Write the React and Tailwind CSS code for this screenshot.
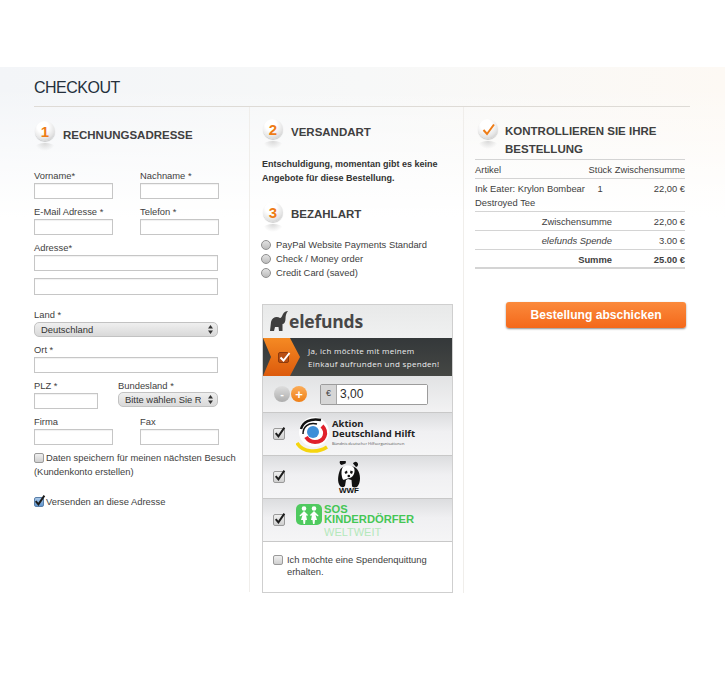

const Badge = ({ children }) => (
  <div className="relative w-[24px] h-[32px] shrink-0">
    <div className="absolute left-[1px] top-[22px] w-[20px] h-[8px] rounded-[50%] bg-[radial-gradient(ellipse_at_top,#d8d8d8,transparent_70%)]" />
    <div className="w-[20px] h-[20px] ml-[1px] rounded-full bg-[radial-gradient(circle_at_40%_30%,#ffffff_30%,#e4e4e4_65%,#b4b4b4)] flex items-center justify-center text-[#ee7c16] font-bold text-[15px] leading-none shadow-[0_1px_1px_rgba(0,0,0,0.2)]">
      {children}
    </div>
  </div>
);

const H = ({ children, className = "" }) => (
  <h2 className={"text-[11.5px] font-bold text-[#404040] leading-[18px] " + className}>{children}</h2>
);

const Label = ({ children }) => <label className="block h-[14px] leading-[14px] text-[#3e3e3e]">{children}</label>;

const Input = ({ w = "w-[79px]" }) => (
  <input className={w + " block h-[16px] bg-white border border-[#c6c6c6] shadow-[inset_0_1px_1px_rgba(0,0,0,0.06)]"} />
);

const Field = ({ label, w }) => (
  <div>
    <Label>{label}</Label>
    <Input w={w} />
  </div>
);

const Sel = ({ w, children, pl = "pl-[6px]" }) => (
  <div className={"relative h-[15px] " + w}>
    <select className={"appearance-none block w-full h-[15px] rounded-[5px] border border-[#c2c2c2] bg-[linear-gradient(#efefef,#d9d9d9)] text-[#333] text-[9.4px] leading-[13px] overflow-hidden pr-[16px] " + pl}>
      <option>{children}</option>
    </select>
    <svg className="absolute right-[5px] top-[3px] pointer-events-none" width="5" height="9" viewBox="0 0 5 9" fill="#333">
      <path d="M2.5 0 5 3.4H0zM2.5 9 0 5.6h5z" />
    </svg>
  </div>
);

const Check = ({ checked, blue, className = "" }) => (
  <span className={"inline-flex shrink-0 items-center justify-center w-[10px] h-[10px] rounded-[2px] border " + (blue ? "border-[#5a7fa8] bg-[linear-gradient(#a9c8e8,#5f95cf)] " : "border-[#9a9a9a] bg-[linear-gradient(#f0f0f0,#cfcfcf)] ") + className}>
    {checked && (
      <svg width="13" height="13" viewBox="0 0 12 12" fill="none" className="-mt-[3px] shrink-0">
        <path d="M2.5 6.5 5 9.5 10.5 1.5" stroke="#1d1d1d" strokeWidth="1.8" />
      </svg>
    )}
  </span>
);

const Radio = ({ label }) => (
  <div className="flex items-center h-[14px]">
    <span className="w-[10px] h-[10px] rounded-full border border-[#8e8e8e] bg-[linear-gradient(#e2e2e2,#bcbcbc)] mr-[4px] ml-[-1px]" />
    <span className="ml-[1px]">{label}</span>
  </div>
);

const Row = ({ children, className = "" }) => (
  <div className={"grid grid-cols-[137px_73px] border-b border-[#d4d4d4] " + className}>{children}</div>
);

const CharityRow = ({ children, h = "h-[42px]" }) => (
  <div className={h + " flex items-center relative border-b border-[#c8c8c8] bg-[linear-gradient(#dcdddf,#f0f0f2_45%,#f5f5f6)]"}>
    <Check checked className="ml-[10px] !w-[12px] !h-[12px]" />
    {children}
  </div>
);

export default function App() {
  return (
    <div className="min-h-[680px] bg-white text-[9.4px] text-[#3e3e3e] font-['Liberation_Sans',Arial,sans-serif]">
      <div className="h-[67px]" />
      <div className="h-[613px] pl-[34px] bg-[linear-gradient(to_bottom,transparent_0,transparent_20px,#ffffff_150px),linear-gradient(to_right,#f3f5f8,#f7f8f8_50%,#fdf9f4)]">
        <div className="w-[656px]">
          <div className="h-[40px] border-b border-[#dedbd6] flex items-start pt-[12px]">
            <h1 className="text-[16px] leading-[18px] text-[#24303c] tracking-[-0.5px]">CHECKOUT</h1>
          </div>
          <div className="flex">
            <section className="w-[216px] h-[485px] border-r border-[#f0eeeb]">
              <div className="flex items-start pt-[14px] h-[62px]">
                <Badge>1</Badge>
                <H className="ml-[5px] mt-[5px]">RECHNUNGSADRESSE</H>
              </div>
              <div className="grid grid-cols-[106px_79px] gap-y-[6px] pr-0">
                <Field label="Vorname*" />
                <Field label="Nachname *" />
                <Field label="E-Mail Adresse *" />
                <Field label="Telefon *" />
              </div>
              <div className="mt-[6px]">
                <Field label="Adresse*" w="w-[184px]" />
              </div>
              <div className="mt-[7px]">
                <Input w="w-[184px] !h-[17px]" />
              </div>
              <div className="mt-[13px]">
                <Label>Land *</Label>
                <Sel w="w-[184px]">Deutschland</Sel>
              </div>
              <div className="mt-[6px]">
                <Field label="Ort *" w="w-[184px]" />
              </div>
              <div className="mt-[6px] flex">
                <Field label="PLZ *" w="w-[64px]" />
                <div className="ml-[20px]">
                  <Label>Bundesland *</Label>
                  <div className="-mt-[1px]"><Sel w="w-[100px]">Bitte wählen Sie Region</Sel></div>
                </div>
              </div>
              <div className="mt-[6px] grid grid-cols-[106px_79px]">
                <Field label="Firma" />
                <Field label="Fax" />
              </div>
              <div className="mt-[6px] leading-[14px]">
                <div className="flex items-center whitespace-nowrap">
                  <Check className="mr-[2px]" />Daten speichern für meinen nächsten Besuch
                </div>
                <div>(Kundenkonto erstellen)</div>
              </div>
              <div className="mt-[16px] flex items-center leading-[14px]">
                <Check checked blue className="mr-[2px]" />Versenden an diese Adresse
              </div>
            </section>

            <section className="w-[214px] pl-[12px] pr-[10px] border-r border-[#f0eeeb]">
              <div className="flex items-start pt-[12px] h-[50px]">
                <Badge>2</Badge>
                <H className="ml-[5px] mt-[4px]">VERSANDART</H>
              </div>
              <p className="font-bold text-[9px] leading-[14px] text-[#333] whitespace-nowrap">
                Entschuldigung, momentan gibt es keine<br />Angebote für diese Bestellung.
              </p>
              <div className="flex items-start mt-[17px] h-[32px]">
                <Badge>3</Badge>
                <H className="ml-[5px] mt-[3px]">BEZAHLART</H>
              </div>
              <div className="mt-[4px] ml-0">
                <Radio label="PayPal Website Payments Standard" />
                <Radio label="Check / Money order" />
                <Radio label="Credit Card (saved)" />
              </div>

              <div className="mt-[24px] w-[191px] h-[289px] border border-[#cfcfcf] bg-white">
                <div className="h-[33px] flex items-center pl-[7px] bg-[linear-gradient(#e8e9e9,#f0f1f1)]">
                  <svg width="18" height="21" viewBox="0 0 18 21" fill="#3e3e3e">
                    <path d="M0 20 1 11C2 6 7 5 10 7 11.500 7 12 5 13 3 14 1 16 0 18 0 16 2 15.500 5 15.500 8 15.500 11 14 13 12.500 13L12.500 20H9L8.500 16H5L4 20z" />
                  </svg>
                  <span className="ml-[1px] font-['Open_Sans',sans-serif] font-bold text-[#474747] text-[17.500px] leading-none tracking-[-0.2px]">elefunds</span>
                </div>
                <div className="relative h-[38px] bg-[linear-gradient(#34383a,#454744)] flex items-center pl-[45px]">
                  <svg className="absolute left-0 top-0" width="38" height="38" viewBox="0 0 38 38">
                    <defs>
                      <linearGradient id="og" x1="0" y1="0" x2="0" y2="1">
                        <stop offset="0" stopColor="#f58a23" />
                        <stop offset="1" stopColor="#dc5a0c" />
                      </linearGradient>
                    </defs>
                    <path d="M0 0H27L37 19 27 38H0L8 19z" fill="url(#og)" />
                  </svg>
                  <span className="absolute left-[15px] top-[14px] w-[11px] h-[11px] rounded-[2px] bg-[#b84e12] border border-[#8d3a0c]">
                    <svg className="absolute -left-[1px] -top-[3px]" width="13" height="13" viewBox="0 0 13 13" fill="none">
                      <path d="M2.500 7.500 5.500 10.500 11.500 3" stroke="#fff" strokeWidth="2" />
                    </svg>
                  </span>
                  <div className="text-[#eeeeee] text-[8px] leading-[13px] font-['Open_Sans',sans-serif] tracking-[0.3px] whitespace-nowrap">
                    Ja, ich möchte mit meinem<br />Einkauf aufrunden und spenden!
                  </div>
                </div>
                <div className="h-[37px] flex items-center pl-[11px] border-b border-[#c8c8c8] bg-[linear-gradient(#e2e3e4,#f2f2f3)]">
                  <span className="w-[16px] h-[16px] rounded-full bg-[linear-gradient(#dedede,#adadad)] flex items-center justify-center text-white font-bold text-[11px] leading-none">-</span>
                  <span className="w-[16px] h-[16px] ml-[1px] rounded-full bg-[linear-gradient(#fbac58,#ef7f17)] flex items-center justify-center text-white font-bold text-[13px] leading-none">+</span>
                  <div className="ml-[13px] flex h-[21px] w-[108px] border border-[#9c9c9c] rounded-[2px]">
                    <span className="w-[16px] bg-[#d6d6d6] border-r border-[#a8a8a8] flex items-center justify-center text-[9px] text-[#444]">€</span>
                    <input readOnly value="3,00" className="min-w-0 flex-1 bg-white pl-[3px] text-[12px] text-[#2c2c2c]" />
                  </div>
                </div>
                <CharityRow h="h-[43px]">
                  <svg className="absolute left-[33px] top-[4px]" width="34" height="36" viewBox="0 0 34 36" fill="none">
                    <circle cx="18" cy="15" r="15" fill="#fff" />
                    <path d="M5 12C7 5 14 1 25 3" stroke="#111" strokeWidth="2.500" />
                    <path d="M7 17C7 10 12 5 21 7" stroke="#111" strokeWidth="1.500" />
                    <path d="M26 9C32 15 29 25 19 25 15 25 12 23 10 20" stroke="#e0212b" strokeWidth="4" />
                    <circle cx="17" cy="15" r="6" fill="#3e8fd8" />
                    <path d="M1 26C7 36 22 36 31 30" stroke="#f5d50f" strokeWidth="3.500" />
                  </svg>
                  <div className="absolute left-[69px] top-[6px] font-['Open_Sans',sans-serif] font-bold text-[#222] text-[9.500px] leading-[10px] whitespace-nowrap">
                    Aktion<br />Deutschland Hilft
                    <div className="text-[4px] leading-[10px] font-normal text-[#555]">Bündnis deutscher Hilfsorganisationen</div>
                  </div>
                </CharityRow>
                <CharityRow h="h-[43px]">
                  <svg className="absolute left-[74px] top-[5px]" width="24" height="27" viewBox="0 0 24 27">
                    <path d="M4.500 4a3 3 0 1 1 4-1.500zM16 2.500a2.600 2.600 0 1 1 3 3.500z" fill="#111" />
                    <path d="M3 9C5 4 17 4 20 8 24 13 24 22 20 26 17 27 15 26 15 25L14.500 19 11 18 9 19 8 25C6 27 4 26 3 25 0 21 1 14 3 9z" fill="#111" />
                    <path d="M6 6C9 4 15 4 17 7 18.500 10 17 16 12.500 17 8 18 6 21 5 16 4 12 4.500 8 6 6z" fill="#fff" />
                    <path d="M7.500 11l2.500-1.500 .5 2.500-2 1zM16 10.500l-2.500-1-.5 2.500 2 1z" fill="#111" />
                    <circle cx="11.800" cy="15" r="1.300" fill="#111" />
                  </svg>
                  <span className="absolute left-[74px] top-[30px] w-[24px] text-center font-bold text-[8px] leading-[9px] text-[#111]">WWF</span>
                </CharityRow>
                <CharityRow h="h-[43px]">
                  <svg className="absolute left-[33px] top-[3px]" width="26" height="26" viewBox="0 0 26 26">
                    <rect width="26" height="21" y="2" rx="5" fill="#4fca5f" />
                    <g fill="#fff">
                      <circle cx="8" cy="6.500" r="2.300" />
                      <circle cx="18" cy="6.500" r="2.300" />
                      <path d="M8 9 12 13 11 14 10 13 11 18H9.500L9 22H7.500L7 18H5L6.500 13 4 14.500 3.500 13.500z" />
                      <path d="M18 9 22.500 13.500 22 14.500 19.500 13 21 18H19L18.500 22H17L16.500 18H15L16 13 15 14 14 13z" />
                    </g>
                  </svg>
                  <div className="absolute left-[61px] top-[5px] whitespace-nowrap">
                    <div className="text-[#45c655] font-bold text-[11.200px] leading-[10px]">SOS</div>
                    <div className="text-[#45c655] font-bold text-[11.200px] leading-[10px]">KINDERDÖRFER</div>
                    <div className="text-[#b4e8bb] text-[11px] leading-[12px] mt-[2px]">WELTWEIT</div>
                  </div>
                </CharityRow>
                <div className="flex items-start pl-[10px] pt-[12px] leading-[11.500px]">
                  <Check className="mt-[1px] mr-[4px]" />
                  <span>Ich möchte eine Spendenquittung<br />erhalten.</span>
                </div>
              </div>
            </section>

            <section className="pl-[11px] w-[226px]">
              <div className="flex items-start pt-[12px] pl-[2px] h-[52px]">
                <Badge>
                  <svg width="13" height="13" viewBox="0 0 13 13" fill="none">
                    <path d="M1.500 7 5 11 12 1.500" stroke="#ee7c16" strokeWidth="2" />
                  </svg>
                </Badge>
                <H className="ml-[4px] mt-[3px] w-[170px]">KONTROLLIEREN SIE IHRE BESTELLUNG</H>
              </div>
              <div className="w-[210px] border-t border-[#d4d4d4]">
                <Row className="h-[19px] leading-[19px]">
                  <div className="flex justify-between"><span>Artikel</span><span>Stück</span></div>
                  <span className="text-right whitespace-nowrap">Zwischensumme</span>
                </Row>
                <Row className="h-[33px] leading-[14px] pt-[3px]">
                  <div className="grid grid-cols-[115px_22px]">
                    <span>Ink Eater: Krylon Bombear Destroyed Tee</span>
                    <span className="text-center pr-[2px]">1</span>
                  </div>
                  <span className="text-right">22,00 €</span>
                </Row>
                <Row className="h-[19px] leading-[20px]">
                  <span className="text-right">Zwischensumme</span>
                  <span className="text-right">22,00 €</span>
                </Row>
                <Row className="h-[19px] leading-[20px]">
                  <span className="text-right italic">elefunds Spende</span>
                  <span className="text-right">3.00 €</span>
                </Row>
                <Row className="h-[19px] leading-[20px] font-bold border-b-2">
                  <span className="text-right">Summe</span>
                  <span className="text-right">25.00 €</span>
                </Row>
              </div>
              <button className="mt-[33px] ml-[31px] block w-[180px] h-[26px] rounded-[3px] bg-[linear-gradient(#fb8a3c,#f4681a)] text-white font-bold text-[12.100px] shadow-[0_1px_2px_rgba(0,0,0,0.45)]">
                Bestellung abschicken
              </button>
            </section>
          </div>
        </div>
      </div>
    </div>
  );
}
